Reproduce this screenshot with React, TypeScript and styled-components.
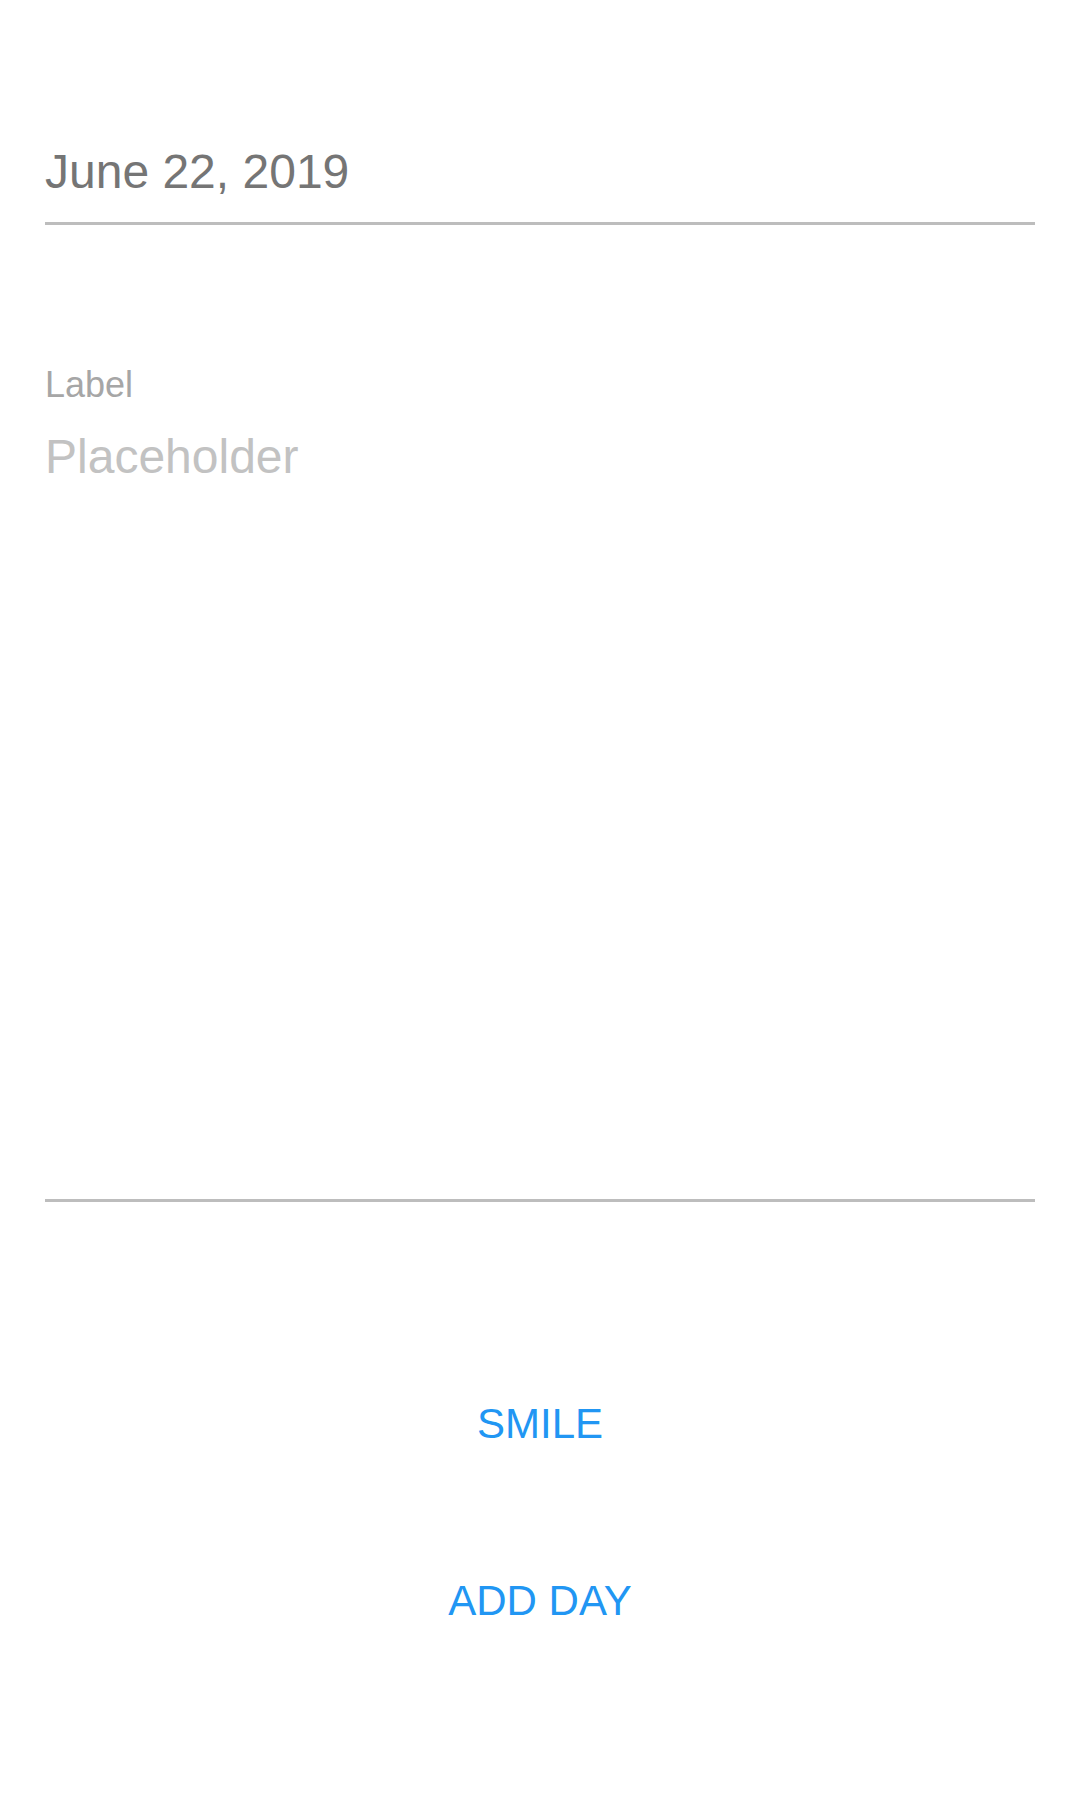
import React from "react";
import styled, { createGlobalStyle } from "styled-components";

const GlobalStyle = createGlobalStyle`
  html, body {
    margin: 0;
    padding: 0;
    background: #ffffff;
  }
  body {
    font-family: "Liberation Sans", Arial, sans-serif;
  }
`;

const Page = styled.div`
  display: flex;
  flex-direction: column;
  padding: 144px 45px 0;
  min-height: 1794px;
  box-sizing: border-box;
  background: #ffffff;
`;

const DateField = styled.div`
  font-size: 48px;
  line-height: 56px;
  color: #757575;
  padding-bottom: 22px;
  border-bottom: 3px solid #bdbdbd;
`;

const NoteField = styled.div`
  display: flex;
  flex-direction: column;
  margin-top: 140px;
  height: 834px;
  border-bottom: 3px solid #bdbdbd;
`;

const Label = styled.div`
  font-size: 36px;
  line-height: 40px;
  color: #a6a6a6;
`;

const Placeholder = styled.div`
  margin-top: 24px;
  font-size: 48px;
  line-height: 56px;
  color: #c2c2c2;
`;

const Actions = styled.div`
  display: flex;
  flex-direction: column;
  align-items: center;
  margin-top: 198px;
  gap: 129px;
`;

const TextButton = styled.button`
  background: none;
  border: none;
  padding: 0;
  font-family: "Liberation Sans", Arial, sans-serif;
  font-size: 42px;
  line-height: 48px;
  color: #2196f3;
  text-transform: uppercase;
  cursor: pointer;
`;

export default function App() {
  return (
    <>
      <GlobalStyle />
      <Page>
        <DateField>June 22, 2019</DateField>
        <NoteField>
          <Label>Label</Label>
          <Placeholder>Placeholder</Placeholder>
        </NoteField>
        <Actions>
          <TextButton>Smile</TextButton>
          <TextButton>Add Day</TextButton>
        </Actions>
      </Page>
    </>
  );
}
